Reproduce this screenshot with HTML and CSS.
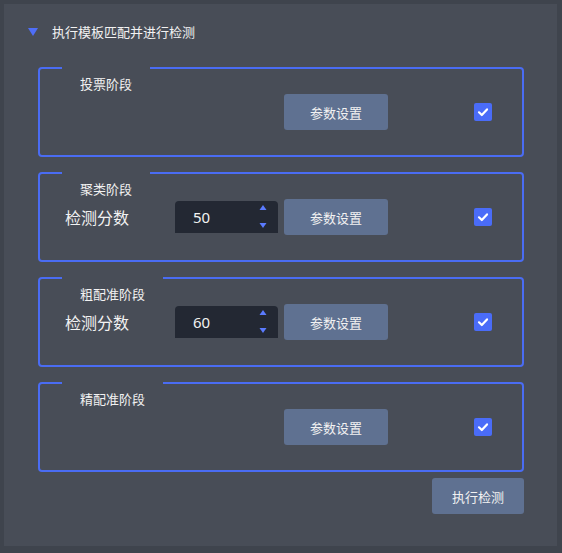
FILE: index.html
```html
<!DOCTYPE html>
<html lang="zh-CN">
<head>
    <meta charset="UTF-8">
    <meta name="viewport" content="width=device-width, initial-scale=1.0">
    <title>执行模板匹配并进行检测</title>
    <link rel="stylesheet" href="styles.css">
</head>
<body>
    <div class="panel">
        <div class="panel-header">
            <span class="arrow"></span>
            <span class="panel-title">执行模板匹配并进行检测</span>
        </div>
        <div class="stages">
            <div class="stage">
                <div class="stage-title">投票阶段</div>
                <div class="stage-row">
                    <span class="score-label"></span>
                    <span class="score-input empty"></span>
                    <button class="btn param-btn">参数设置</button>
                    <span class="check"><svg width="18" height="18" viewBox="0 0 18 18"><polyline points="5,9.3 7.8,12 13,6.4" fill="none" stroke="#fff" stroke-width="2.2" stroke-linecap="round" stroke-linejoin="round"/></svg></span>
                </div>
            </div>
            <div class="stage">
                <div class="stage-title">聚类阶段</div>
                <div class="stage-row">
                    <span class="score-label">检测分数</span>
                    <span class="score-input">
                        <span class="score-value">50</span>
                        <span class="spinner"><svg width="8" height="24" viewBox="0 0 8 24"><polygon points="4,0 7.5,5 0.5,5" fill="#5b7bff"/><polygon points="0.5,18 7.5,18 4,23" fill="#5b7bff"/></svg></span>
                    </span>
                    <button class="btn param-btn">参数设置</button>
                    <span class="check"><svg width="18" height="18" viewBox="0 0 18 18"><polyline points="5,9.3 7.8,12 13,6.4" fill="none" stroke="#fff" stroke-width="2.2" stroke-linecap="round" stroke-linejoin="round"/></svg></span>
                </div>
            </div>
            <div class="stage">
                <div class="stage-title">粗配准阶段</div>
                <div class="stage-row">
                    <span class="score-label">检测分数</span>
                    <span class="score-input">
                        <span class="score-value">60</span>
                        <span class="spinner"><svg width="8" height="24" viewBox="0 0 8 24"><polygon points="4,0 7.5,5 0.5,5" fill="#5b7bff"/><polygon points="0.5,18 7.5,18 4,23" fill="#5b7bff"/></svg></span>
                    </span>
                    <button class="btn param-btn">参数设置</button>
                    <span class="check"><svg width="18" height="18" viewBox="0 0 18 18"><polyline points="5,9.3 7.8,12 13,6.4" fill="none" stroke="#fff" stroke-width="2.2" stroke-linecap="round" stroke-linejoin="round"/></svg></span>
                </div>
            </div>
            <div class="stage">
                <div class="stage-title">精配准阶段</div>
                <div class="stage-row">
                    <span class="score-label"></span>
                    <span class="score-input empty"></span>
                    <button class="btn param-btn">参数设置</button>
                    <span class="check"><svg width="18" height="18" viewBox="0 0 18 18"><polyline points="5,9.3 7.8,12 13,6.4" fill="none" stroke="#fff" stroke-width="2.2" stroke-linecap="round" stroke-linejoin="round"/></svg></span>
                </div>
            </div>
            <div class="actions">
                <button class="btn run-btn">执行检测</button>
            </div>
        </div>
    </div>
</body>
</html>
```

FILE: styles.css
```css
body {
    margin: 0;
    background-color: #3f444d;
    font-family: "Noto Sans CJK SC", "Noto Sans", sans-serif;
    color: #f2f2f2;
}
.panel {
    margin: 4px;
    width: 553px;
    height: 542px;
    box-sizing: border-box;
    padding: 20px 33px 0 24px;
    background-color: #484d57;
}
.panel-header {
    display: flex;
    align-items: center;
    height: 16px;
    font-size: 13px;
    line-height: 16px;
}
.arrow {
    width: 0;
    height: 0;
    border-left: 5px solid transparent;
    border-right: 5px solid transparent;
    border-top: 8px solid #4f6ef7;
    margin-right: 14px;
}
.stages {
    margin: 27px 0 0 10px;
}
.stage {
    border: 2px solid #4a6cf3;
    border-radius: 4px;
    height: 90px;
    box-sizing: border-box;
    margin-bottom: 15px;
}
.stage-title {
    margin: -2px 0 0 22px;
    width: fit-content;
    padding: 8px 18px 0;
    background-color: #484d57;
    font-size: 13px;
    line-height: 18px;
}
.stage-row {
    display: flex;
    align-items: center;
    height: 36px;
    margin-top: 1px;
    padding: 0 30px 0 25px;
}
.score-label {
    width: 110px;
    font-size: 16px;
}
.score-input {
    display: flex;
    align-items: center;
    width: 103px;
    height: 32px;
    box-sizing: border-box;
    padding: 0 11px 0 18px;
    background-color: #232833;
    border-radius: 4px 4px 0 0;
}
.score-input.empty {
    background: none;
}
.score-value {
    flex: 1;
    font-size: 15px;
    font-family: "Noto Sans", sans-serif;
}
.spinner {
    display: flex;
}
.btn {
    border: none;
    border-radius: 3px;
    background-color: #5f7191;
    color: #f2f2f2;
    font-family: inherit;
    font-size: 13px;
    height: 36px;
    padding: 0;
    cursor: pointer;
}
.param-btn {
    width: 104px;
    margin-left: 6px;
}
.check {
    display: flex;
    margin-left: auto;
    width: 18px;
    height: 18px;
    border-radius: 2px;
    background-color: #4a6cf8;
}
.actions {
    display: flex;
    justify-content: flex-end;
    margin-top: -9px;
}
.run-btn {
    width: 92px;
}
```
